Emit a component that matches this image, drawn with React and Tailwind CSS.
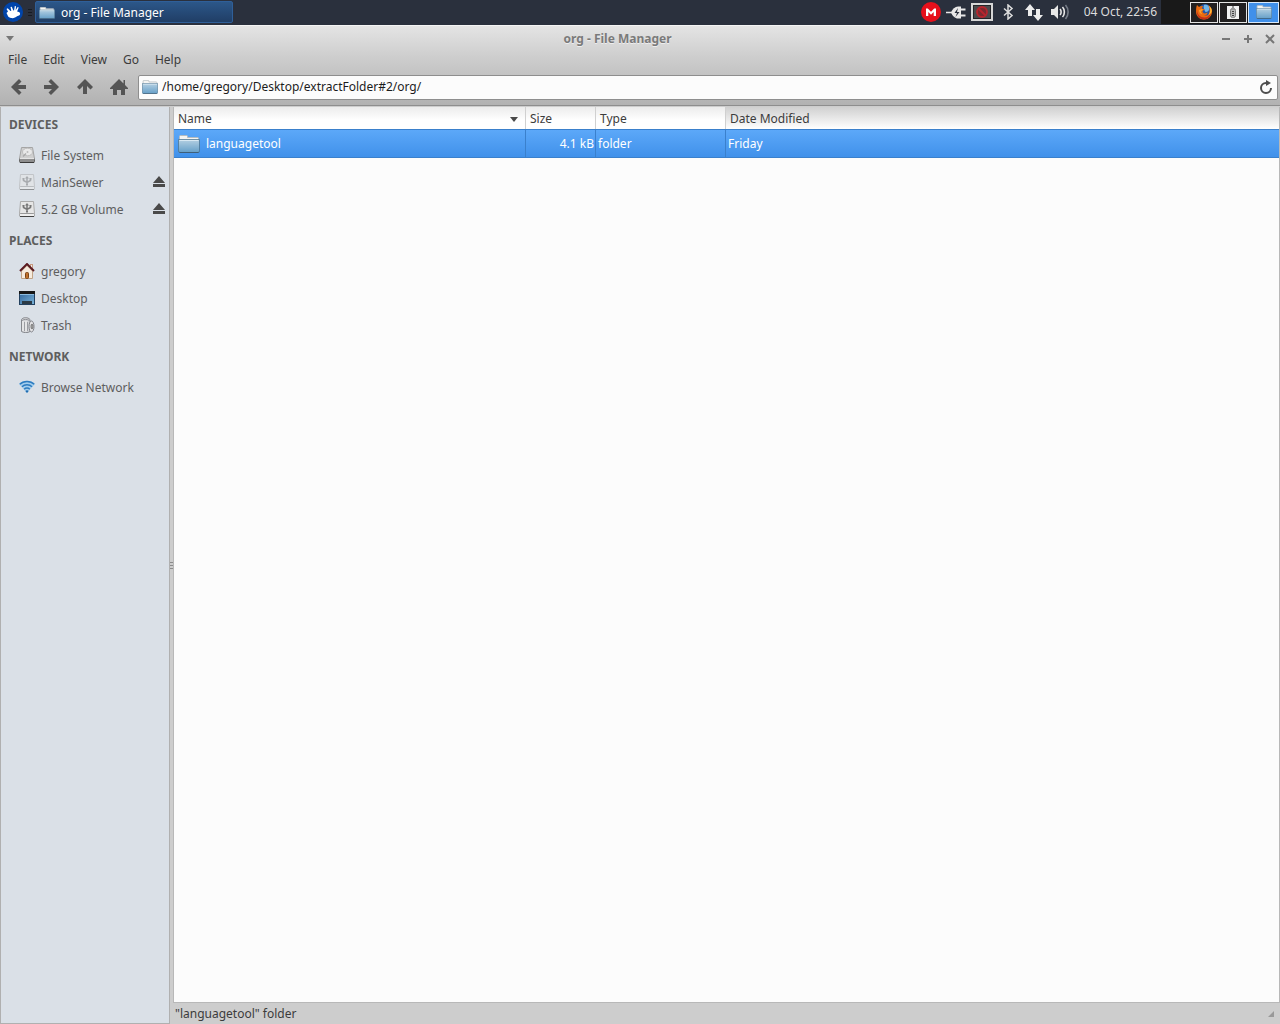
import React, { useState } from 'react';

function FolderIcon({ className }) {
  return (
    <svg className={className} viewBox="0 0 22 18" preserveAspectRatio="none" aria-hidden="true">
      <defs>
        <linearGradient id="folderFront" x1="0" y1="0" x2="0" y2="1">
          <stop offset="0" stopColor="#b5d0e2" />
          <stop offset="1" stopColor="#659fc8" />
        </linearGradient>
      </defs>
      <path d="M1.5 16V1.500a1 1 0 0 1 1-1h6a1 1 0 0 1 1 1v1h10a1 1 0 0 1 1 1V16z" fill="#f4f4f2" stroke="#b4bbbf" />
      <path d="M.5 4.500h21V16a1.500 1.500 0 0 1-1.500 1.500H2A1.500 1.500 0 0 1 .5 16z" fill="url(#folderFront)" stroke="#4b738f" strokeOpacity="0.75" />
      <path d="M1.500 5.500h19" stroke="#d8e8f2" />
      <path d="M1.500 17.500h19" stroke="#3f5f78" />
    </svg>
  );
}

function MouseLogo() {
  return (
    <svg className="size-5" viewBox="0 0 20 20" aria-hidden="true">
      <circle cx="10" cy="10" r="10" fill="#0044aa" />
      <path d="M3.500 11L5 9.500 3.500 7l1.200-.8L7.500 9l.8-.3L7.500 5l1.300-.3 1.500 3.800.8-.2.700-4.300 1.200.3-.3 4 2-3.300 1 .6-1.600 4 1.800.4c1.300.7 1.500 2 .8 3-1 .8-1.800.6-2.700 1.300-1.500 1.300-3.500 2.200-6 1.700-2-.4-3.200-1.400-3.500-3z" fill="#fff" />
    </svg>
  );
}

function MegaIcon() {
  return (
    <svg className="size-5" viewBox="0 0 20 20" aria-hidden="true">
      <circle cx="10" cy="10" r="10" fill="#e6101b" />
      <path d="M5 14V6.500h1.800L10 9.700l3.200-3.200H15V14h-2.300v-4L10 12.700 7.300 10v4z" fill="#fff" />
    </svg>
  );
}

function PlugIcon() {
  return (
    <svg className="h-4 w-5" viewBox="0 0 20 16" aria-hidden="true">
      <path d="M0 8.500h7" stroke="#e8e8e8" strokeWidth="1.500" />
      <path d="M5 8.500C6.500 5 9 2.500 12 2.500h3v12h-3c-3 0-5.500-2.500-7-6z" fill="#e8e8e8" />
      <path d="M15 5.500h4.500M15 11.500h4.500" stroke="#e8e8e8" strokeWidth="2" />
      <path d="M12 4L8.500 9H11l-1.500 4L13.500 8H11z" fill="#2a303d" />
    </svg>
  );
}

function ScreenBlockedIcon() {
  return (
    <svg className="h-[18px] w-[22px]" viewBox="0 0 22 18" aria-hidden="true">
      <rect x="1" y="1" width="20" height="16" fill="#4a4a4c" stroke="#d6d6d6" strokeWidth="2" />
      <rect x="2.500" y="2.500" width="17" height="13" fill="none" stroke="#242428" />
      <circle cx="11" cy="9" r="5" fill="#7a2a30" stroke="#b8252d" strokeWidth="1.800" />
      <path d="M7.500 5.500l7 7" stroke="#b8252d" strokeWidth="1.800" />
    </svg>
  );
}

function BluetoothIcon() {
  return (
    <svg className="h-4 w-3" viewBox="0 0 12 16" aria-hidden="true">
      <path d="M2 4.500l8 7L6 15V1l4 3.500-8 7" fill="none" stroke="#dedede" strokeWidth="1.500" />
    </svg>
  );
}

function TransferIcon() {
  return (
    <svg className="h-[18px] w-[18px]" viewBox="0 0 18 18" aria-hidden="true">
      <path d="M5 1l5 6H7v6H3V7H0zM13 18l5-6h-3V6h-4v6H8z" fill="#ececec" />
    </svg>
  );
}

function VolumeIcon() {
  return (
    <svg className="h-4 w-5" viewBox="0 0 20 16" aria-hidden="true">
      <path d="M1 5h3l4-4v14l-4-4H1z" fill="#e8e8e8" />
      <path d="M10 5c1.500 1.500 1.500 4.500 0 6M12.500 3c2.500 2.500 2.500 7.500 0 10" fill="none" stroke="#e8e8e8" strokeWidth="1.600" />
      <path d="M15.500 1c3.500 4 3.500 10 0 14" fill="none" stroke="#767c87" strokeWidth="1.600" />
    </svg>
  );
}

function FirefoxIcon() {
  return (
    <svg className="size-4" viewBox="0 0 16 16" aria-hidden="true">
      <circle cx="9" cy="6.500" r="6.500" fill="#2456a5" />
      <path d="M8 1c3-1 5 .5 5.500 3 0 2-1.500 4-4 4C8 6 7 3 8 1z" fill="#6fb5e8" />
      <path d="M1 1l2 2c1.500-1 3-1.200 4-.5-1 1-1 1.500-.5 2.500H9L6.500 7c0 1.500 1 2.500 2.500 2.500 1 0 2-1 2.500-.5-.5 2-2 2.500-3.500 2.500 4 1 6-1.500 5.500-6 0-2-.5-3-1.500-4.500C15 2.500 16 5 16 7.500 16 12 12.500 15.500 8 15.500S0 12 0 7.500C0 5 .2 3 1 1z" fill="#ea6a10" />
      <path d="M1 5c0 5.500 3 8.500 7.500 8.500 3 0 5-2 6-5 .3 4-2.500 7-6.500 7C3 15.500 0 11 1 5z" fill="#c1301c" />
      <path d="M13 2c2 3 1.500 6.500-.5 9 3-1 4-4.500 2.500-7z" fill="#ffc03a" />
      <path d="M3 6l3-1 1 .8L5 7.500c0 1 .5 2 1.500 3C4 10 3 8 3 6z" fill="#f9a12e" />
    </svg>
  );
}

function ArchiveIcon() {
  return (
    <svg className="h-[13px] w-3" viewBox="0 0 12 13" aria-hidden="true">
      <rect width="12" height="13" fill="#f2f2f2" />
      <rect x="3.500" y="2.500" width="5" height="9" rx="2" fill="#b9b9b9" stroke="#7c7c7c" />
      <path d="M6 0v4" stroke="#999" strokeWidth="2" />
      <path d="M5 5.500h2M5 7.500h2M5 9.500h2" stroke="#444" />
    </svg>
  );
}

function ArrowIcon({ direction }) {
  const paths = {
    left: 'M8 0l2.500 2.500L7 6h8v4H7l3.500 3.500L8 16 0 8z',
    right: 'M7 0L4.500 2.500 8 6H0v4h8l-3.500 3.500L7 16l8-8z',
    up: 'M8 0l8 8-2.500 2.500L10 7v8H6V7l-3.500 3.500L0 8z',
  };
  return (
    <svg className="size-4" viewBox="0 0 16 16" aria-hidden="true">
      <path d={paths[direction]} fill="#555" />
    </svg>
  );
}

function HomeIcon() {
  return (
    <svg className="h-4 w-[18px]" viewBox="0 0 18 16" aria-hidden="true">
      <path d="M9 0l4.500 4.500V1H15v5l3 3v1h-3v6h-4v-5H7v5H3v-6H0V9z" fill="#555" />
    </svg>
  );
}

function DiskIcon() {
  return (
    <svg className="mb-px size-4" viewBox="0 0 16 16" aria-hidden="true">
      <path d="M2.500.5h11l2 11H.5z" fill="#cfcfcf" stroke="#a4a4a4" />
      <ellipse cx="8.500" cy="5" rx="5" ry="3.800" fill="#e9e9e9" stroke="#bdbdbd" />
      <circle cx="8.500" cy="5" r="1" fill="#bbb" />
      <path d="M7 6.500L4 9.500" stroke="#aaa" strokeWidth="1.500" />
      <rect x="0.500" y="11.500" width="15" height="4" rx="1" fill="#8e8e8e" stroke="#666" />
      <path d="M1 11.500h14" stroke="#e4e4e4" />
      <path d="M1 15.500h14" stroke="#3a3a3a" />
    </svg>
  );
}

function UsbIcon({ faded }) {
  return (
    <svg className={faded ? 'mb-px size-4 opacity-50' : 'mb-px size-4'} viewBox="0 0 16 16" aria-hidden="true">
      <path d="M1.500.5h13l1 12H.5z" fill="#e6e6e6" stroke="#aaa" />
      <rect x="0.500" y="12.500" width="15" height="3" rx="1" fill="#eee" stroke="#999" />
      <path d="M1 15.500h14" stroke="#444" />
      <path d="M8 3v8M4.500 4.500v2L8 8.500l3.500-2v-2" fill="none" stroke="#777" strokeWidth="1.500" />
      <path d="M6 4.500L8 2l2 2.500zM3.500 4h2v1.500h-2zM10.500 4h2v1.500h-2zM7 10h2v1.500H7z" fill="#777" />
    </svg>
  );
}

function HouseIcon() {
  return (
    <svg className="mb-px size-4" viewBox="0 0 16 16" aria-hidden="true">
      <rect x="11.500" y="1.500" width="2" height="5" fill="#eee" stroke="#c79a80" />
      <path d="M2.500 8L8 2.500 13.500 8v7.500h-11z" fill="#f6ebdd" stroke="#c2a587" />
      <path d="M1 8L8 1l7 7" fill="none" stroke="#5b1a20" strokeWidth="2" />
      <rect x="6.500" y="9.500" width="3" height="6" rx="1" fill="#c0712c" stroke="#7b4315" />
    </svg>
  );
}

function DesktopIcon() {
  return (
    <svg className="mb-px size-4" viewBox="0 0 16 16" aria-hidden="true">
      <defs>
        <linearGradient id="desktopBg" x1="0" y1="0" x2="1" y2="1">
          <stop offset="0" stopColor="#2f6298" />
          <stop offset="1" stopColor="#7ab4da" />
        </linearGradient>
      </defs>
      <rect x="0.500" y="1.500" width="15" height="13" fill="url(#desktopBg)" stroke="#24415f" />
      <rect y="1" width="16" height="3" fill="#171717" />
      <path d="M1 4.500h14" stroke="#8cbce0" />
      <rect x="3" y="11" width="10" height="3" fill="#2b3a46" />
    </svg>
  );
}

function TrashIcon() {
  return (
    <svg className="mb-px size-4" viewBox="0 0 16 16" aria-hidden="true">
      <path d="M2.500 2.500C4 0 9 0 11 2.500v12c-2 1.500-6.500 1.500-8.500 0z" fill="#d2d3d6" stroke="#87898e" />
      <path d="M3 3.500c2-1.500 5-1.500 7.500 0" fill="none" stroke="#8f9197" />
      <path d="M5.500 5v9M8.500 5v9" stroke="#9b9da2" />
      <path d="M7 4v10.500M4 4v10" stroke="#f6f6f6" />
      <ellipse cx="12.500" cy="9.500" rx="2.500" ry="5.500" fill="#e4e4e6" stroke="#808288" />
      <ellipse cx="13" cy="9.500" rx="1" ry="2.500" fill="#aaa" stroke="#777" />
    </svg>
  );
}

function NetworkIcon() {
  return (
    <svg className="mb-px size-4" viewBox="0 0 16 16" aria-hidden="true">
      <path d="M0 5C4 .8 12 .8 16 5L8 14z" fill="#a3cdec" />
      <g fill="none" stroke="#2d7cc0" strokeWidth="1.500">
        <path d="M.8 5.200C4.500 1.500 11.500 1.500 15.200 5.200" />
        <path d="M3 7.800c2.500-2.600 7.500-2.600 10 0" />
        <path d="M5.200 10.200c1.500-1.600 4.100-1.600 5.600 0" />
      </g>
      <path d="M6.300 12c1-1 2.400-1 3.400 0L8 14z" fill="#1f6bb0" />
    </svg>
  );
}

function EjectIcon() {
  return (
    <svg className="mb-px size-3" viewBox="0 0 12 12" aria-hidden="true">
      <path d="M6 0l6 7H0zM0 8h12v3H0z" fill="#4a4a4a" />
    </svg>
  );
}

function RefreshIcon() {
  return (
    <svg className="h-[14px] w-3" viewBox="0 0 12 14" aria-hidden="true">
      <path d="M7 3H6A5 5 0 1 0 11 8" fill="none" stroke="#4d4d4d" strokeWidth="2" />
      <path d="M6 0l5 3L6 6z" fill="#4d4d4d" />
    </svg>
  );
}

const sections = [
  {
    title: 'DEVICES',
    items: [
      { name: 'File System', icon: <DiskIcon /> },
      { name: 'MainSewer', icon: <UsbIcon faded />, ejectable: true },
      { name: '5.2 GB Volume', icon: <UsbIcon />, ejectable: true },
    ],
  },
  {
    title: 'PLACES',
    items: [
      { name: 'gregory', icon: <HouseIcon /> },
      { name: 'Desktop', icon: <DesktopIcon /> },
      { name: 'Trash', icon: <TrashIcon /> },
    ],
  },
  {
    title: 'NETWORK',
    items: [{ name: 'Browse Network', icon: <NetworkIcon /> }],
  },
];

const files = [{ name: 'languagetool', size: '4.1 kB', type: 'folder', modified: 'Friday' }];

function TopPanel() {
  return (
    <header className="flex h-[25px] shrink-0 items-center justify-between bg-[#2a303d] pb-px text-[#dcdcdc]">
      <div className="flex items-center">
        <button aria-label="Applications" className="ml-[3px]"><MouseLogo /></button>
        <div className="ml-[5px] mr-[3px] flex w-1 flex-col gap-0.5" aria-hidden="true">
          <span className="h-px bg-[#171b22]" />
          <span className="h-px bg-[#171b22]" />
          <span className="h-px bg-[#171b22]" />
        </div>
        <button className="flex h-[22px] w-[198px] items-center gap-1.5 rounded-xs border border-[#2f5f99] bg-linear-to-b from-[#2c5789] to-[#203e66] px-[3px] pt-0.5 text-white text-shadow-2xs">
          <FolderIcon className="h-3 w-4" />
          org - File Manager
        </button>
      </div>
      <div className="flex h-full items-center">
        <div className="flex items-center">
          <button aria-label="Sync status"><MegaIcon /></button>
          <button aria-label="Power" className="ml-[5px]"><PlugIcon /></button>
          <button aria-label="Screen" className="ml-[5px]"><ScreenBlockedIcon /></button>
          <button aria-label="Bluetooth" className="ml-[9px]"><BluetoothIcon /></button>
          <button aria-label="Network" className="ml-[11px]"><TransferIcon /></button>
          <button aria-label="Volume" className="ml-[7px]"><VolumeIcon /></button>
        </div>
        <time className="ml-3.5 mr-1">04 Oct, 22:56</time>
        <div className="flex h-full items-center gap-px bg-[#191919] pl-[29px] pr-px">
          <button aria-label="Firefox" className="flex h-[21px] w-7 items-center justify-center border border-[#e4e4e4] bg-[#211f20]"><FirefoxIcon /></button>
          <button aria-label="Archive Manager" className="flex h-[21px] w-7 items-center justify-center border border-[#e4e4e4] bg-[#211f20]"><ArchiveIcon /></button>
          <button aria-label="File Manager" className="flex h-[21px] w-[31px] items-center justify-center border border-[#d8e8fa] bg-[#4090ea]"><FolderIcon className="h-3.5 w-4" /></button>
        </div>
      </div>
    </header>
  );
}

function TitleBar() {
  return (
    <div className="flex h-[25px] items-center pl-1.5 pr-[5px] text-[#7a7a7a]">
      <button aria-label="Window menu">
        <svg className="h-[5px] w-2" viewBox="0 0 8 5" aria-hidden="true"><path d="M0 0h8L4 5z" fill="#777" /></svg>
      </button>
      <h1 className="flex-1 text-center font-bold text-shadow-[0_1px_0_#eee]">org - File Manager</h1>
      <div className="flex items-center gap-3">
        <button aria-label="Minimize">
          <svg className="size-2.5" viewBox="0 0 10 10" aria-hidden="true"><path d="M1 5h8" stroke="#777" strokeWidth="2" /></svg>
        </button>
        <button aria-label="Maximize">
          <svg className="size-2.5" viewBox="0 0 10 10" aria-hidden="true"><path d="M1 5h8M5 1v8" stroke="#777" strokeWidth="2" /></svg>
        </button>
        <button aria-label="Close">
          <svg className="size-2.5" viewBox="0 0 10 10" aria-hidden="true"><path d="M1 1l8 8M9 1L1 9" stroke="#777" strokeWidth="2" /></svg>
        </button>
      </div>
    </div>
  );
}

function Sidebar() {
  return (
    <nav className="w-[170px] shrink-0 border border-t-0 border-[#b0b0b0] bg-[#dae0e7] text-[#5e5e5e]">
      {sections.map((section) => (
        <section key={section.title}>
          <h2 className="h-[35px] px-2 font-bold leading-[35px]">{section.title}</h2>
          <ul>
            {section.items.map((item) => (
              <li key={item.name} className="flex h-[27px] items-center pl-[18px] pr-1">
                <a href="#" className="flex flex-1 items-center gap-1.5">{item.icon}{item.name}</a>
                {item.ejectable && <button aria-label={`Eject ${item.name}`}><EjectIcon /></button>}
              </li>
            ))}
          </ul>
        </section>
      ))}
    </nav>
  );
}

function FileTable() {
  return (
    <table className="w-full table-fixed border-separate border-spacing-0 text-left">
      <colgroup>
        <col className="w-[352px]" />
        <col className="w-[70px]" />
        <col className="w-[130px]" />
        <col />
      </colgroup>
      <thead>
        <tr className="h-[22px] bg-linear-to-b from-[#ececec] to-white to-60% text-[#3c3c3c]">
          <th className="border-r border-[#d0d0d0] px-1 pb-0 pt-0.5 font-normal">
            <button className="flex w-full items-center justify-between pr-[3px]">
              Name
              <svg className="h-[5px] w-2" viewBox="0 0 8 5" aria-hidden="true"><path d="M0 0h8L4 5z" fill="#4a4a4a" /></svg>
            </button>
          </th>
          <th className="border-r border-[#d0d0d0] px-1 pb-0 pt-0.5 font-normal"><button>Size</button></th>
          <th className="border-r border-[#d0d0d0] px-1 pb-0 pt-0.5 font-normal"><button>Type</button></th>
          <th className="bg-linear-to-b from-[#d0d0d0] to-white px-1 pb-0 pt-0.5 font-normal"><button>Date Modified</button></th>
        </tr>
      </thead>
      <tbody>
        {files.map((file) => (
          <tr key={file.name} className="h-[29px] bg-linear-to-b from-[#5da9f9] to-[#3f90ea] text-white">
            <td className="border-y border-r border-[#3a80cc] py-0 pl-1 pr-0">
              <div className="flex items-center gap-1.5"><FolderIcon className="h-[18px] w-[22px]" />{file.name}</div>
            </td>
            <td className="border-y border-r border-[#3a80cc] py-0 pl-0 pr-px text-right">{file.size}</td>
            <td className="border-y border-r border-[#3a80cc] py-0 pl-0.5 pr-0">{file.type}</td>
            <td className="border-y border-[#3a80cc] py-0 pl-0.5 pr-0">{file.modified}</td>
          </tr>
        ))}
      </tbody>
    </table>
  );
}

export default function App() {
  const [path, setPath] = useState('/home/gregory/Desktop/extractFolder#2/org/');

  return (
    <div className="flex min-h-screen flex-col bg-[#cdcdcd] font-['Noto_Sans',sans-serif] text-[12px] leading-4 text-[#3c3c3c]">
      <TopPanel />
      <div className="border-b border-[#8e8e8e] border-t border-t-[#f4f4f4] bg-linear-to-b from-[#e4e4e4] via-[#cdcdcd] via-40% to-[#b2b2b2]">
        <TitleBar />
        <div className="flex h-[18px] items-center gap-4 px-2">
          <button>File</button>
          <button>Edit</button>
          <button>View</button>
          <button>Go</button>
          <button>Help</button>
        </div>
        <div className="flex h-9 items-center pr-0.5">
          <div className="flex items-center gap-[17px] pl-[11px] pr-2.5">
            <button aria-label="Back"><ArrowIcon direction="left" /></button>
            <button aria-label="Forward"><ArrowIcon direction="right" /></button>
            <button aria-label="Up"><ArrowIcon direction="up" /></button>
            <button aria-label="Home"><HomeIcon /></button>
          </div>
          <div className="flex h-[25px] flex-1 items-center gap-1 rounded-xs border border-[#8e8e8e] bg-[#fcfcfc] pl-[3px] pr-[5px]">
            <FolderIcon className="h-3.5 w-4" />
            <input aria-label="Location" value={path} onChange={(e) => setPath(e.target.value)} className="min-w-0 flex-1 bg-transparent text-[#1c1c1c] outline-none" />
            <button aria-label="Reload"><RefreshIcon /></button>
          </div>
        </div>
      </div>

      <div className="flex flex-1 pt-px">
        <Sidebar />
        <div className="flex w-[3px] shrink-0 flex-col items-center justify-center gap-0.5" aria-hidden="true">
          <span className="h-px w-full bg-[#8c8c8c]" />
          <span className="h-px w-full bg-[#8c8c8c]" />
          <span className="h-px w-full bg-[#8c8c8c]" />
        </div>
        <div className="flex min-w-0 flex-1 flex-col">
          <main className="flex-1 border border-t-0 border-[#b8b8b8] bg-[#fcfcfc]">
            <FileTable />
          </main>
          <footer className="flex h-[21px] items-center justify-between px-0.5">
            <span>"languagetool" folder</span>
            <svg className="mr-1 size-1.5" viewBox="0 0 6 6" aria-hidden="true"><path d="M6 0v6H0z" fill="#999" /></svg>
          </footer>
        </div>
      </div>
    </div>
  );
}
